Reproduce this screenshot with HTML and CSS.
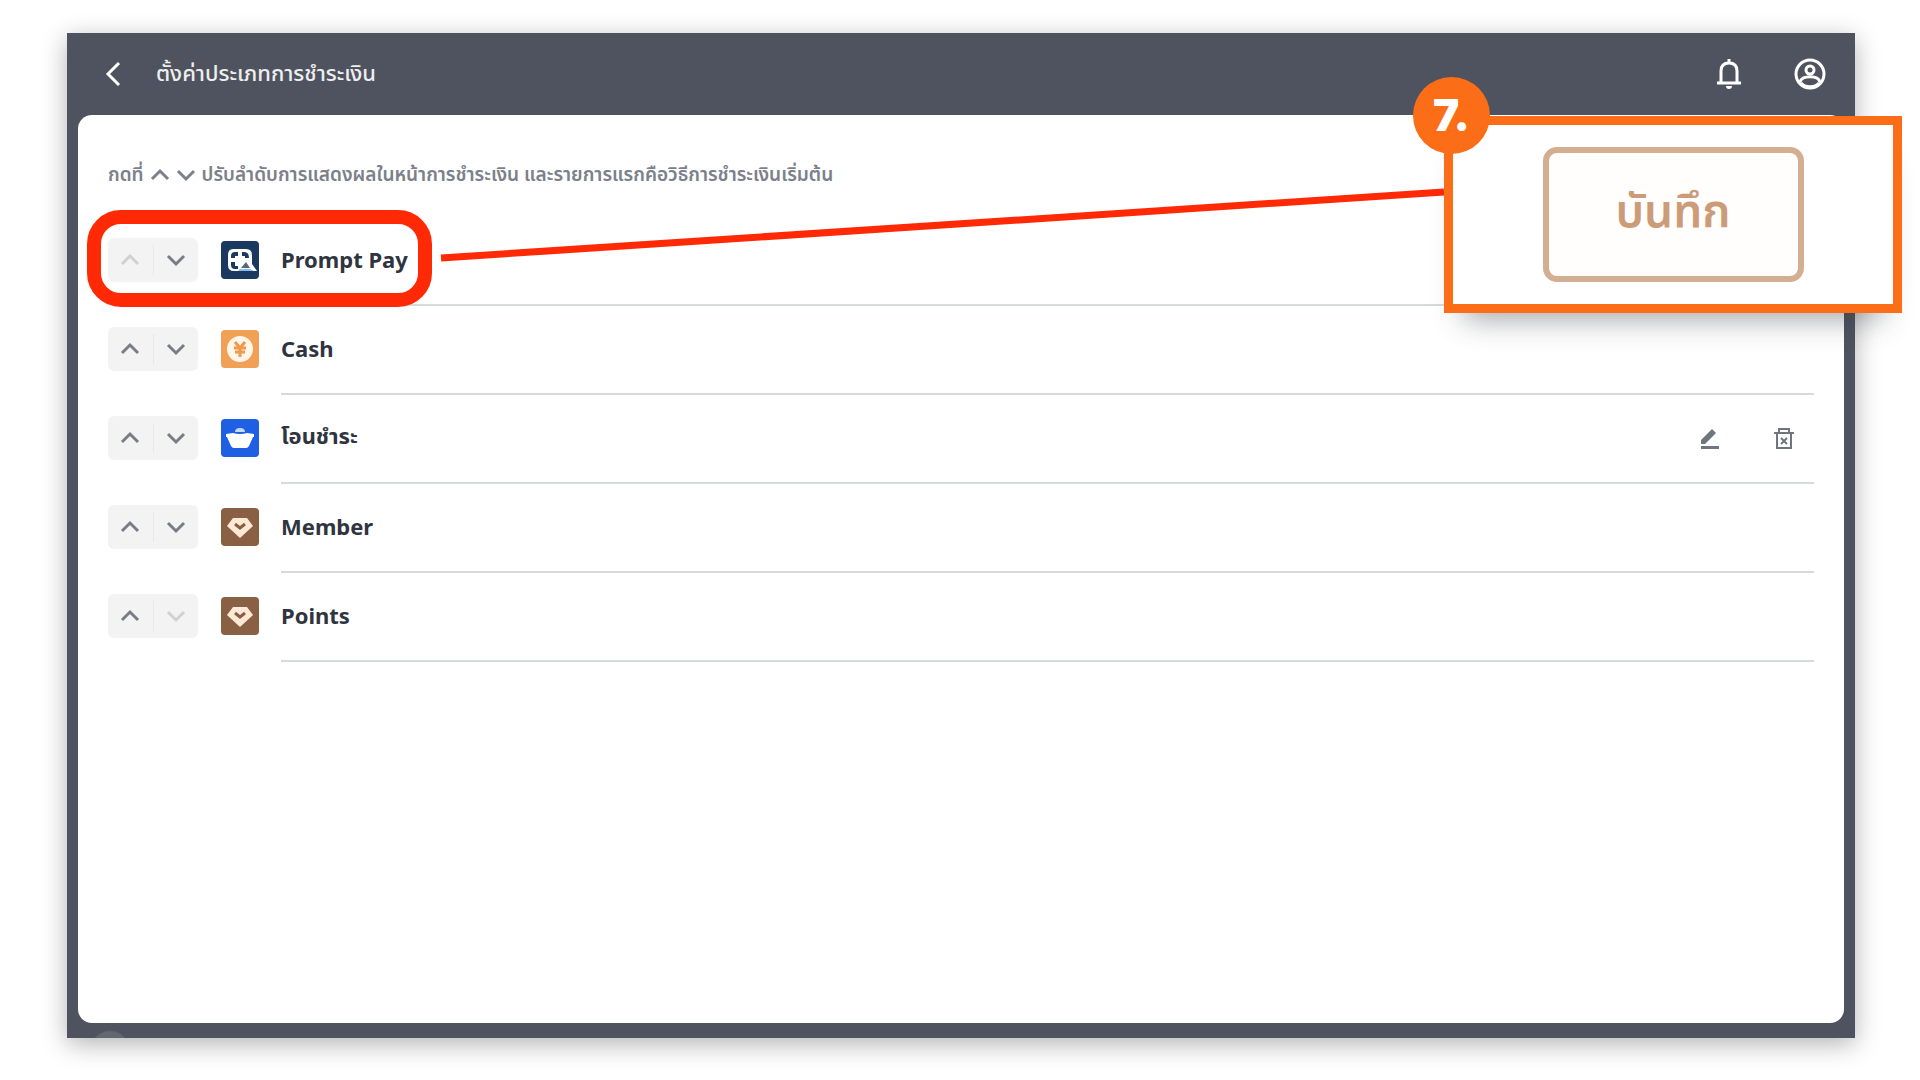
FILE: index.html
```html
<!DOCTYPE html>
<html lang="th">
  <head>
    <meta charset="UTF-8" />
    <title>ตั้งค่าประเภทการชำระเงิน</title>
    <link rel="stylesheet" href="styles.css">
  </head>
  <body>
    <!-- ICONS -->
    <svg class="sprite" aria-hidden="true">
      <symbol id="up" viewBox="0 0 20 20">
        <path d="M2 14l8-8 8 8" fill="none" stroke="currentColor" stroke-width="3" />
      </symbol>
      <symbol id="down" viewBox="0 0 20 20">
        <path d="M2 6l8 8 8-8" fill="none" stroke="currentColor" stroke-width="3" />
      </symbol>
      <symbol id="diamond" viewBox="0 0 38 38">
        <path d="M12 10h14l6 8-13 12L6 18z" fill="#fee9d7" />
        <path d="M14 16l5 4 5-4" fill="none" stroke="#8a6044" stroke-width="3" />
      </symbol>
    </svg>

    <div class="window">
      <header class="topbar">
        <button class="icon-button" aria-label="กลับ">
          <svg width="20" height="26" viewBox="0 0 20 26">
            <path d="M17 2L6 13l11 11" fill="none" stroke="#fff" stroke-width="3" />
          </svg>
        </button>
        <h1>ตั้งค่าประเภทการชำระเงิน</h1>
        <button class="icon-button" aria-label="การแจ้งเตือน">
          <svg width="28" height="32" viewBox="0 0 28 32" fill="none" stroke="#fff" stroke-width="3">
            <path d="M5 25V13q0-8 8-8t8 8v12M1 25h24" />
            <path d="M13 1v4" />
            <path d="M10 28h6a3 3 0 0 1-6 0z" fill="#fff" stroke="none" />
          </svg>
        </button>
        <button class="icon-button" aria-label="บัญชี">
          <svg width="32" height="32" viewBox="0 0 32 32" fill="none" stroke="#fff" stroke-width="3">
            <circle cx="16" cy="16" r="14" />
            <circle cx="16" cy="12" r="4" />
            <path d="M6 24c2-7 18-7 20 0M7 25c4 5 14 5 18 0" />
          </svg>
        </button>
      </header>

      <main class="panel">
        <p class="hint">
          กดที่
          <svg class="hint-icon"><use href="#up" /></svg>
          <svg class="hint-icon"><use href="#down" /></svg>
          ปรับลำดับการแสดงผลในหน้าการชำระเงิน และรายการแรกคือวิธีการชำระเงินเริ่มต้น
        </p>

        <ul class="methods">
          <li class="method highlighted">
            <div class="stepper">
              <button aria-label="เลื่อนขึ้น" disabled><svg><use href="#up" /></svg></button>
              <button aria-label="เลื่อนลง"><svg><use href="#down" /></svg></button>
            </div>
            <svg class="logo promptpay" viewBox="0 0 38 38">
              <path d="M12 8h13q6 0 6 6v9l5 7H13q-6 0-6-6V14q0-6 5-6z" fill="#fff" />
              <path d="M10 17v-2q0-4 4-4h3v4h-3v2zM21 11h2q5 0 5 6h-4v-2h-3zM10 21h4v4h3v3h-3q-4 0-4-4z" fill="#1b3860" />
              <path d="M20 27l5-6 4 6z" fill="#56677c" />
              <path d="M19 28h10l4 2H17z" fill="#89bdf0" />
            </svg>
            <div class="info"><span class="name">Prompt Pay</span></div>
          </li>
          <li class="method">
            <div class="stepper">
              <button aria-label="เลื่อนขึ้น"><svg><use href="#up" /></svg></button>
              <button aria-label="เลื่อนลง"><svg><use href="#down" /></svg></button>
            </div>
            <svg class="logo cash" viewBox="0 0 38 38">
              <circle cx="19" cy="19" r="13" fill="#fff5e8" />
              <path d="M14 12l5 6 5-6M13 18h12M14 22h10M19 17v10" fill="none" stroke="#f0994b" stroke-width="3" />
            </svg>
            <div class="info"><span class="name">Cash</span></div>
          </li>
          <li class="method">
            <div class="stepper">
              <button aria-label="เลื่อนขึ้น"><svg><use href="#up" /></svg></button>
              <button aria-label="เลื่อนลง"><svg><use href="#down" /></svg></button>
            </div>
            <svg class="logo transfer" viewBox="0 0 38 38">
              <path d="M14 13q0-4 5-4t5 4z" fill="#c5d8ff" />
              <path d="M5 15l7-1q7 2 14 0l7 1v3h-1l-4 9q-1 2-3 2H13q-2 0-3-2l-4-9H5z" fill="#fff" />
            </svg>
            <div class="info">
              <span class="name">โอนชำระ</span>
              <button class="icon-button" aria-label="แก้ไข">
                <svg width="20" height="22" viewBox="0 0 20 22" fill="#6f757f">
                  <path d="M1 16v-4L12 1l4 4L5 16zM1 18h18v3H1z" />
                </svg>
              </button>
              <button class="icon-button" aria-label="ลบ">
                <svg width="20" height="22" viewBox="0 0 20 22" fill="none" stroke="#6f757f" stroke-width="2">
                  <path d="M0 5h20M5 5V1h10v4M3 5v15h14V5M7 10l6 6M13 10l-6 6" />
                </svg>
              </button>
            </div>
          </li>
          <li class="method">
            <div class="stepper">
              <button aria-label="เลื่อนขึ้น"><svg><use href="#up" /></svg></button>
              <button aria-label="เลื่อนลง"><svg><use href="#down" /></svg></button>
            </div>
            <svg class="logo member"><use href="#diamond" /></svg>
            <div class="info"><span class="name">Member</span></div>
          </li>
          <li class="method">
            <div class="stepper">
              <button aria-label="เลื่อนขึ้น"><svg><use href="#up" /></svg></button>
              <button aria-label="เลื่อนลง" disabled><svg><use href="#down" /></svg></button>
            </div>
            <svg class="logo member"><use href="#diamond" /></svg>
            <div class="info"><span class="name">Points</span></div>
          </li>
        </ul>
      </main>

      <svg class="pointer" viewBox="0 0 1000 66" preserveAspectRatio="none">
        <line x1="0" y1="66" x2="1000" y2="0" />
      </svg>

      <!-- STEP -->
      <section class="callout">
        <span class="step">7.</span>
        <button class="save">บันทึก</button>
      </section>
    </div>
  </body>
</html>
```

FILE: styles.css
```css
*,
*::after {
  box-sizing: border-box;
}

body {
  margin: 0;
  min-height: 100vh;
  padding: 33px 65px 42px 67px;
  display: flex;
  background: #fff;
  color: #30343f;
  font-family: "Noto Sans", "Noto Sans Thai", sans-serif;
}

button {
  border: none;
  background: none;
  padding: 0;
  font: inherit;
  color: inherit;
  cursor: pointer;
}

svg {
  display: block;
}

.sprite {
  position: absolute;
  width: 0;
  height: 0;
}

.window {
  position: relative;
  flex: 1;
  display: flex;
  flex-direction: column;
  padding: 0 11px 15px;
  background: radial-gradient(circle at 43px 100%, #636770 18px, transparent 20px) 0 12px no-repeat #4e535f;
  box-shadow: 0 6px 24px rgba(0, 0, 0, 0.3);
}

.topbar {
  height: 82px;
  display: flex;
  align-items: center;
  gap: 50px;
  padding: 0 18px 0 24px;
  color: #eee;
}

.topbar h1 {
  flex: 1;
  margin: 0 0 0 -16px;
  font-size: 22px;
  font-weight: 500;
}

.panel {
  flex: 1;
  padding: 44px 30px 30px;
  background: #fff;
  border-radius: 14px;
}

.hint {
  display: flex;
  align-items: center;
  gap: 6px;
  height: 32px;
  margin: 0 0 26px;
  font-size: 19px;
  font-weight: 600;
  color: #7b808a;
}

.hint-icon {
  width: 20px;
  height: 20px;
}

.methods {
  list-style: none;
  margin: 0;
  padding: 0;
}

.method {
  position: relative;
  display: flex;
  align-items: center;
  height: 89px;
}

.stepper {
  display: flex;
  width: 90px;
  height: 44px;
  margin-bottom: 3px;
  padding: 7px 0;
  border-radius: 6px;
  background: #f3f3f3;
}

.stepper button {
  flex: 1;
  display: grid;
  place-items: center;
  color: #787d85;
}

.stepper button + button {
  border-left: 1px solid #e8e8e8;
}

.stepper button:disabled {
  color: #cfd1d3;
}

.stepper svg {
  width: 20px;
  height: 20px;
}

.logo {
  width: 38px;
  height: 38px;
  margin: 0 22px 3px 23px;
  border-radius: 4px;
}

.promptpay {
  background: #1b3860;
}

.cash {
  background: #f0a155;
}

.transfer {
  background: #1f5fe4;
}

.member {
  background: #8a6044;
}

.info {
  flex: 1;
  align-self: stretch;
  display: flex;
  align-items: center;
  gap: 54px;
  padding-right: 20px;
  border-bottom: 2px solid #d7dadb;
}

.name {
  flex: 1;
  padding-bottom: 4px;
  font-size: 22px;
  font-weight: 700;
}

/* ring around the selected method */
.highlighted::after {
  content: "";
  position: absolute;
  left: -21px;
  top: -7px;
  width: 345px;
  height: 97px;
  border: 14px solid #ff2a05;
  border-radius: 34px;
  pointer-events: none;
}

.pointer {
  position: absolute;
  left: 374px;
  top: 159px;
  width: calc(100% - 785px);
  height: 66px;
  overflow: visible;
  pointer-events: none;
}

.pointer line {
  stroke: #ff2a05;
  stroke-width: 7px;
  vector-effect: non-scaling-stroke;
}

.callout {
  position: absolute;
  top: 83px;
  right: -47px;
  width: 458px;
  height: 197px;
  display: grid;
  place-items: center;
  border: 9px solid #fb6e17;
  background: #fff;
  box-shadow: 0 26px 28px -20px rgba(50, 55, 65, 0.45);
}

.step {
  position: absolute;
  left: -40px;
  top: -48px;
  width: 77px;
  height: 77px;
  border-radius: 50%;
  background: #fb6e17;
  color: #fff;
  font: 900 44px/76px Inter, sans-serif;
  text-align: center;
}

.save {
  width: 261px;
  height: 135px;
  padding-bottom: 4px;
  border: 6px solid #d4ae90;
  border-radius: 14px;
  background: #fffefc;
  color: #cc9c78;
  font-size: 46px;
  font-weight: 600;
}
```
